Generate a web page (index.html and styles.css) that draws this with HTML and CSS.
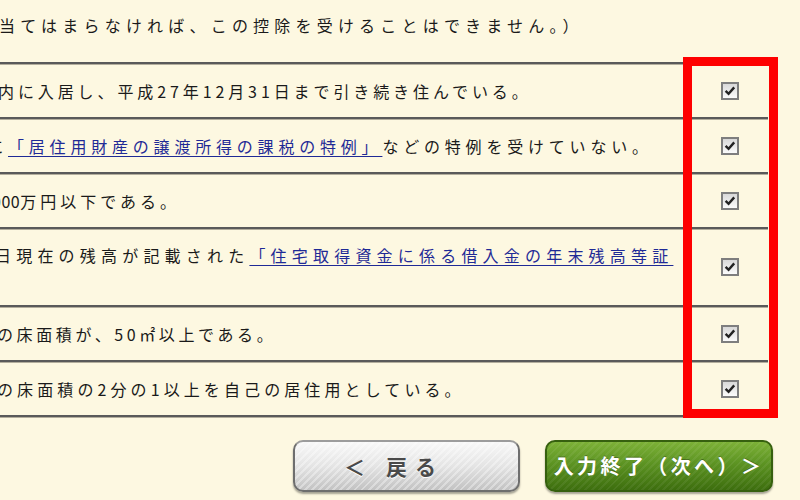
FILE: index.html
```html
<!DOCTYPE html>
<html lang="ja">
<head>
<meta charset="utf-8">
<title>住宅借入金等特別控除</title>
<link rel="stylesheet" href="styles.css">
</head>
<body>
<div class="page">
  <p class="note">当てはまらなければ、この控除を受けることはできません。）</p>
  <div class="table">
    <div class="row">
      <div class="txt"><span class="line r1">内に入居し、平成27年12月31日まで引き続き住んでいる。</span></div>
      <div class="chk"><span class="cb"><svg viewBox="0 0 14 14" width="14" height="14"><path d="M2.6 6.8 L5.6 9.8 L11.2 3.4" fill="none" stroke="#222" stroke-width="2.4"/></svg></span></div>
    </div>
    <div class="row">
      <div class="txt"><span class="line r2">に<a class="lnk" href="#">「居住用財産の譲渡所得の課税の特例」</a>などの特例を受けていない。</span></div>
      <div class="chk"><span class="cb"><svg viewBox="0 0 14 14" width="14" height="14"><path d="M2.6 6.8 L5.6 9.8 L11.2 3.4" fill="none" stroke="#222" stroke-width="2.4"/></svg></span></div>
    </div>
    <div class="row">
      <div class="txt"><span class="line r3"><span class="num">000</span>万円以下である。</span></div>
      <div class="chk"><span class="cb"><svg viewBox="0 0 14 14" width="14" height="14"><path d="M2.6 6.8 L5.6 9.8 L11.2 3.4" fill="none" stroke="#222" stroke-width="2.4"/></svg></span></div>
    </div>
    <div class="row tall">
      <div class="txt"><span class="line r4">日現在の残高が記載された<a class="lnk" href="#">「住宅取得資金に係る借入金の年末残高等証</a></span><span class="line r4">&nbsp;</span></div>
      <div class="chk"><span class="cb"><svg viewBox="0 0 14 14" width="14" height="14"><path d="M2.6 6.8 L5.6 9.8 L11.2 3.4" fill="none" stroke="#222" stroke-width="2.4"/></svg></span></div>
    </div>
    <div class="row">
      <div class="txt"><span class="line r5">の床面積が、50㎡以上である。</span></div>
      <div class="chk"><span class="cb"><svg viewBox="0 0 14 14" width="14" height="14"><path d="M2.6 6.8 L5.6 9.8 L11.2 3.4" fill="none" stroke="#222" stroke-width="2.4"/></svg></span></div>
    </div>
    <div class="row">
      <div class="txt"><span class="line r6">の床面積の2分の1以上を自己の居住用としている。</span></div>
      <div class="chk"><span class="cb"><svg viewBox="0 0 14 14" width="14" height="14"><path d="M2.6 6.8 L5.6 9.8 L11.2 3.4" fill="none" stroke="#222" stroke-width="2.4"/></svg></span></div>
    </div>
  </div>
  <div class="actions">
    <button class="btn back" type="button">＜ 戻る</button>
    <button class="btn next" type="button">入力終了（次へ）＞</button>
  </div>
  <div class="mark"></div>
</div>
</body>
</html>
```
FILE: styles.css
```css
html, body {
  margin: 0;
  padding: 0;
}
body {
  background: #fdf8e1;
  overflow: hidden;
  font-family: "Noto Sans CJK JP", "Noto Sans", sans-serif;
  font-size: 16px;
  color: #1a1a1a;
}
.page {
  position: relative;
  width: 800px;
  height: 500px;
}
.note {
  margin: 0;
  padding-top: 15px;
  height: 20px;
  line-height: 20px;
  letter-spacing: 5.2px;
  text-indent: -1px;
  white-space: nowrap;
}
.table {
  margin-top: 27px;
  width: 768px;
  border-bottom: 2px solid #5a5a5a;
  box-shadow: 0 1px 0 #b3ae9d;
}
.row {
  display: flex;
  height: 55px;
  box-sizing: border-box;
  border-top: 2px solid #5a5a5a;
  box-shadow: inset 0 1px 0 #b3ae9d;
}
.row.tall {
  height: 78px;
}
.txt {
  flex: 1;
  display: flex;
  flex-direction: column;
  justify-content: center;
  align-items: flex-start;
  white-space: nowrap;
  line-height: 20px;
}
.row.tall .txt {
  line-height: 24px;
}
.line {
  display: block;
}
.r1 { letter-spacing: 3.9px; margin-left: -2px; }
.r2 { letter-spacing: 4.8px; margin-left: -12.8px; }
.r3 { letter-spacing: 4px; margin-left: -8px; }
.r4 { letter-spacing: 5.2px; margin-left: -5px; }
.r5 { letter-spacing: 3.6px; margin-left: -3px; }
.r6 { letter-spacing: 4.1px; margin-left: -3px; }
.num {
  letter-spacing: 0.5px;
}
.lnk {
  color: #1f2a96;
  text-decoration: underline;
  text-decoration-thickness: 1px;
  text-underline-offset: 3px;
}
.chk {
  width: 76px;
  display: flex;
  align-items: center;
  justify-content: center;
}
.cb {
  width: 14px;
  height: 14px;
  border: 2px solid #7e7e7e;
  background: linear-gradient(#d8d8d8, #fbfbfb);
  display: flex;
}
.cb svg {
  display: block;
}
.actions {
  display: flex;
  justify-content: flex-end;
  gap: 25px;
  margin-top: 23px;
  padding-right: 27px;
}
.btn {
  appearance: none;
  margin: 0;
  padding: 0;
  box-sizing: border-box;
  height: 52px;
  border-radius: 10px;
  font-family: inherit;
  font-weight: 700;
  line-height: 1;
  display: flex;
  align-items: center;
  justify-content: center;
  white-space: nowrap;
  box-shadow: 0 2px 2px rgba(0, 0, 0, 0.35);
}
.back {
  width: 227px;
  padding-right: 25px;
  font-size: 21px;
  letter-spacing: 8px;
  color: #4a4a4a;
  border: 2px solid #6e6e6e;
  border-top-color: #9c9c9c;
  background:
    repeating-linear-gradient(135deg, rgba(255, 255, 255, 0.35) 0 2px, rgba(255, 255, 255, 0) 2px 5px),
    linear-gradient(#f8f8f8, #e4e4e4 50%, #c2c2c2);
  text-shadow: 0 1px 0 #fff;
}
.next {
  width: 228px;
  font-size: 20px;
  letter-spacing: 3.4px;
  color: #fff;
  border: 2px solid #36600f;
  background:
    repeating-linear-gradient(135deg, rgba(255, 255, 255, 0.06) 0 2px, rgba(255, 255, 255, 0) 2px 5px),
    linear-gradient(#7cb137, #5c9322 45%, #3d6e0e);
  text-shadow: 0 -1px 0 rgba(0, 0, 0, 0.3);
}
.mark {
  position: absolute;
  left: 683px;
  top: 57px;
  width: 95px;
  height: 361px;
  box-sizing: border-box;
  border: 9px solid #fe0000;
}
```
